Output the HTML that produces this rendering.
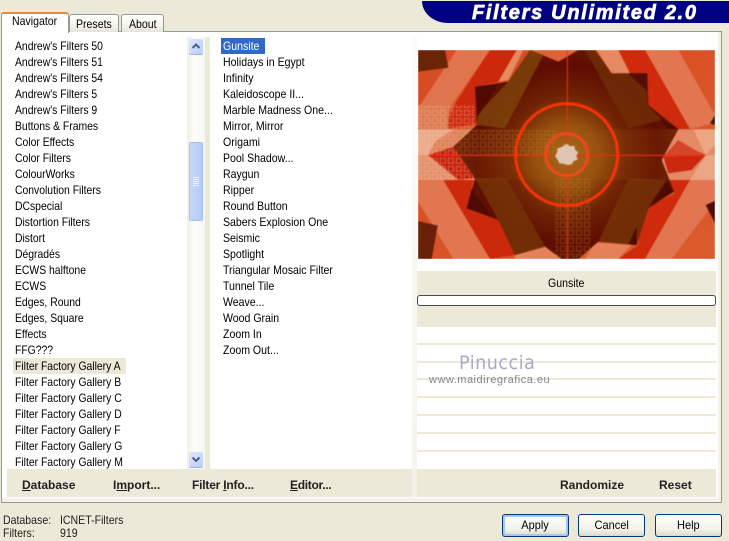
<!DOCTYPE html>
<html><head><meta charset="utf-8"><style>
html,body{margin:0;padding:0}
body{width:729px;height:540px;overflow:hidden;position:relative;background:#ece9d8;font-family:"Liberation Sans",sans-serif;color:#000}
.a{position:absolute}
.t{position:absolute;white-space:nowrap;font-size:12px;line-height:16px;transform:scaleX(.88);transform-origin:0 50%}
.b{position:absolute;white-space:nowrap;font-size:12px;line-height:16px;font-weight:bold;color:#222}
.tab{position:absolute;box-sizing:border-box;border:1px solid #919b9c;border-bottom:0;border-radius:3px 3px 0 0;background:linear-gradient(#fff,#f3f2ea 70%,#e4e2d4)}
.btn{position:absolute;box-sizing:border-box;top:514px;width:67px;height:23px;border:1px solid #003c74;border-radius:3px;background:linear-gradient(#fff,#f3f2ea 70%,#dcd8c8);text-align:center;font-size:12px;line-height:21px}
.btn span{display:inline-block;transform:scaleX(.92)}
.ln{position:absolute;left:417px;width:299px;height:2px;background:#ece9d8}
</style></head><body>

<!-- banner -->
<div class="a" style="left:422px;top:1px;width:307px;height:22px;background:#000080;border-radius:0 0 0 26px/0 0 0 22px"></div>
<div class="a" style="left:472px;top:2px;height:22px;line-height:22px;font-size:20px;font-weight:bold;font-style:italic;color:#fff;letter-spacing:1.7px;white-space:nowrap;-webkit-text-stroke:.7px #fff">Filters Unlimited 2.0</div>

<!-- panel -->
<div class="a" style="left:1px;top:31px;width:721px;height:472px;box-sizing:border-box;border:1px solid #919b9c;background:#fff;box-shadow:inset -3px -4px 0 #f4f2e9"></div>

<!-- tabs -->
<div class="tab" style="left:69px;top:14px;width:50px;height:18px"></div>
<div class="tab" style="left:121px;top:14px;width:43px;height:18px"></div>
<div class="a" style="left:1px;top:12px;width:68px;height:21px;box-sizing:border-box;background:#fff;border:1px solid #919b9c;border-bottom:0;border-top:2px solid #e68b2c;border-radius:3px 3px 0 0"></div>
<div class="t" style="left:12px;top:13px">Navigator</div>
<div class="t" style="left:76px;top:16px">Presets</div>
<div class="t" style="left:129px;top:16px">About</div>

<!-- gutters -->
<div class="a" style="left:205px;top:37px;width:5px;height:460px;background:#ece9d8"></div>
<div class="a" style="left:412px;top:37px;width:5px;height:432px;background:linear-gradient(#fbfbf8,#f6f5ee)"></div>
<div class="a" style="left:412px;top:469px;width:5px;height:28px;background:#f3f1e7"></div>

<!-- scrollbar -->
<div class="a" style="left:187px;top:37px;width:18px;height:432px;background:linear-gradient(90deg,#f0eee4,#fdfdfa 40%,#f7f6f0)"></div>
<div class="a" style="left:189px;top:39px;width:14px;height:15px;border-radius:2px;background:linear-gradient(135deg,#dfe8fd,#b9cdf8);border-bottom:1px solid #9fb4e0"></div>
<svg class="a" style="left:189px;top:39px" width="14" height="15"><path d="M3.500 9 L7 5.500 L10.500 9" fill="none" stroke="#4d6185" stroke-width="2"/></svg>
<div class="a" style="left:189px;top:142px;width:14px;height:79px;box-sizing:border-box;border:1px solid #a9bff0;border-radius:2px;background:linear-gradient(90deg,#c6d6fb,#b6cafa)"></div>
<svg class="a" style="left:189px;top:142px" width="14" height="79"><path d="M4 35.500H10M4 37.500H10M4 39.500H10M4 41.500H10M4 43.500H10" stroke="#eef3ff" stroke-width="1"/></svg>
<div class="a" style="left:189px;top:452px;width:14px;height:15px;border-radius:2px;background:linear-gradient(135deg,#dfe8fd,#b9cdf8);border-bottom:1px solid #9fb4e0"></div>
<svg class="a" style="left:189px;top:452px" width="14" height="15"><path d="M3.500 5.500 L7 9 L10.500 5.500" fill="none" stroke="#4d6185" stroke-width="2"/></svg>

<!-- highlights -->
<div class="a" style="left:13px;top:358px;width:113px;height:16px;background:#ece9d8"></div>
<div class="a" style="left:221px;top:38px;width:44px;height:16px;background:#316ac5"></div>

<!-- left list -->
<div class="t" style="left:15px;top:38px;transform:scaleX(.865)">Andrew's Filters 50<br>Andrew's Filters 51<br>Andrew's Filters 54<br>Andrew's Filters 5<br>Andrew's Filters 9<br>Buttons &amp; Frames<br>Color Effects<br>Color Filters<br>ColourWorks<br>Convolution Filters<br>DCspecial<br>Distortion Filters<br>Distort<br>Dégradés<br>ECWS halftone<br>ECWS<br>Edges, Round<br>Edges, Square<br>Effects<br>FFG???<br>Filter Factory Gallery A<br>Filter Factory Gallery B<br>Filter Factory Gallery C<br>Filter Factory Gallery D<br>Filter Factory Gallery F<br>Filter Factory Gallery G<br>Filter Factory Gallery M</div>

<!-- middle list -->
<div class="t" style="left:223px;top:38px"><span style="color:#fff">Gunsite</span><br>Holidays in Egypt<br>Infinity<br>Kaleidoscope II...<br>Marble Madness One...<br>Mirror, Mirror<br>Origami<br>Pool Shadow...<br>Raygun<br>Ripper<br>Round Button<br>Sabers Explosion One<br>Seismic<br>Spotlight<br>Triangular Mosaic Filter<br>Tunnel Tile<br>Weave...<br>Wood Grain<br>Zoom In<br>Zoom Out...</div>

<!-- preview -->
<div class="a" style="left:418px;top:50px;width:297px;height:209px;overflow:hidden">
<svg style="display:block;filter:blur(.4px)" width="297" height="209" viewBox="9 15 891 627">
<defs>
<radialGradient id="g" gradientUnits="userSpaceOnUse" cx="457" cy="331" r="320">
<stop offset="0" stop-color="#b06c1c"/><stop offset=".3" stop-color="#96500f"/><stop offset=".55" stop-color="#702404"/><stop offset=".85" stop-color="#5e0c02"/><stop offset="1" stop-color="#641604"/>
</radialGradient>
<linearGradient id="o" x1="0" y1="0" x2="1" y2="1"><stop offset="0" stop-color="#d64c22"/><stop offset="1" stop-color="#dc5a2c"/></linearGradient>
<pattern id="p" width="24" height="24" patternUnits="userSpaceOnUse"><rect x="4" y="4" width="15" height="15" fill="none" stroke="#f4c4a4" stroke-opacity=".4" stroke-width="3"/></pattern>
<pattern id="q" width="24" height="24" patternUnits="userSpaceOnUse"><rect x="4" y="4" width="15" height="15" fill="none" stroke="#c08a30" stroke-opacity=".38" stroke-width="3"/></pattern>
</defs>
<rect x="9" y="15" width="891" height="627" fill="url(#o)"/>
<!-- red wedges -->
<polygon points="225,15 305,15 250,110 180,125 188,235 85,253 125,170" fill="#cc280c"/>
<polygon points="610,15 690,15 825,252 790,252 697,180 697,85 640,85" fill="#cf2a0c"/>
<polygon points="760,405 825,405 690,642 610,642 670,600 682,495 780,445" fill="#cf2a0c"/>
<polygon points="85,405 175,405 155,490 250,525 300,630 225,642 145,520" fill="#cc280c"/>
<!-- pale bands -->
<polygon points="125,15 225,15 60,253 9,253 9,190" fill="#e0744c"/>
<polygon points="690,15 790,15 900,210 900,235 825,252" fill="#e17650"/>
<polygon points="825,405 900,405 900,470 770,642 690,642" fill="#e17650"/>
<polygon points="9,405 85,405 225,642 115,642 9,470" fill="#e17650"/>
<polygon points="305,15 325,15 280,105 250,110" fill="#e68a62"/>
<polygon points="545,15 610,15 645,85 590,85" fill="#e68a62"/>
<polygon points="345,15 540,15 430,50" fill="#dc6436"/>
<polygon points="300,630 390,605 440,642 300,642" fill="#e4805a"/>
<polygon points="540,592 650,600 610,642 510,642" fill="#e4805a"/>
<!-- horizontal band -->
<rect x="9" y="253" width="170" height="152" fill="#e4906a"/>
<rect x="9" y="253" width="110" height="77" fill="#ebaa8a"/>
<rect x="9" y="180" width="90" height="73" fill="#dc7a50"/>
<polygon points="40,330 115,305 180,400 130,405" fill="#c4200c"/>
<polygon points="60,290 115,253 160,253 115,305 40,330" fill="#e0805a"/>
<polygon points="790,253 900,253 900,405 760,405 740,345" fill="#e48a64"/>
<polygon points="835,253 900,253 900,300 872,330" fill="#eca684"/>
<polygon points="872,330 900,330 900,405 825,405" fill="#eca684"/>
<polygon points="745,335 872,330 830,375 760,385" fill="#cc2810"/>
<polygon points="790,285 840,315 872,330 745,335" fill="#d4462a"/>
<rect x="9" y="180" width="170" height="225" fill="url(#p)"/>
<!-- star -->
<polygon points="345,15 430,50 490,15 540,15 590,85 697,85 700,180 790,252 740,345 777,440 700,490 665,600 550,590 490,642 440,642 390,605 300,630 250,525 155,490 180,400 115,305 185,240 180,125 280,110" fill="url(#g)"/>
<!-- translucent lighter lobes -->
<polygon points="345,15 385,30 270,250 185,240 190,205 280,110" fill="#7e420a" fill-opacity=".85"/>
<polygon points="510,15 540,15 590,85 697,85 697,180 740,225 640,250" fill="#702e06" fill-opacity=".8"/>
<polygon points="180,400 275,400 390,605 300,630 250,525" fill="#743206" fill-opacity=".85"/>
<polygon points="640,400 760,405 700,490 665,600 550,590" fill="#743206" fill-opacity=".85"/>
<polygon points="115,305 175,253 790,252 740,345 760,405 180,405" fill="#a05a10" fill-opacity=".18"/>
<!-- dark corners -->
<polygon points="180,125 250,118 188,215" fill="#500a02"/>
<polygon points="640,85 697,85 697,140" fill="#540e04"/>
<polygon points="735,218 790,252 755,252" fill="#500a02"/>
<polygon points="755,405 777,440 705,480" fill="#500a02"/>
<polygon points="170,430 230,515 155,490" fill="#500a02"/>
<polygon points="640,598 665,545 665,600" fill="#500a02"/>
<polygon points="9,15 90,15 100,68 9,80" fill="#6c2408"/>
<polygon points="9,528 68,542 50,642 9,642" fill="#682008"/>
<polygon points="900,210 885,235 900,240" fill="#540e04"/>
<polygon points="900,468 872,480 900,535" fill="#540a04"/>
<rect x="125" y="253" width="300" height="80" fill="url(#q)"/>
<rect x="420" y="400" width="105" height="240" fill="url(#q)"/>
<!-- crosshair & rings -->
<path d="M457 15V642M40 331H872" stroke="#ff2a10" stroke-width="3"/>
<circle cx="455" cy="329" r="153" fill="none" stroke="#fb3208" stroke-width="9"/>
<circle cx="455" cy="329" r="63" fill="none" stroke="#f0481a" stroke-width="9"/>
<polygon points="455,296 466,304 478,302 480,314 490,322 484,332 488,344 476,348 470,358 456,360 444,356 434,356 428,344 420,334 426,322 428,310 440,306" fill="#dfc5b2"/>
</svg>
</div>

<!-- right column -->
<div class="a" style="left:417px;top:271px;width:299px;height:56px;background:#ece9d8"></div>
<div class="t" style="left:548px;top:275px">Gunsite</div>
<div class="a" style="left:417px;top:295px;width:299px;height:11px;box-sizing:border-box;border:1px solid #4a4a4a;border-radius:3px;background:#fff"></div>
<div class="ln" style="top:343px"></div>
<div class="ln" style="top:361px"></div>
<div class="ln" style="top:378px"></div>
<div class="ln" style="top:396px"></div>
<div class="ln" style="top:414px"></div>
<div class="ln" style="top:432px"></div>
<div class="ln" style="top:450px"></div>

<!-- watermark -->
<div class="a" style="left:459px;top:351px;font-size:19px;line-height:24px;color:#a8a8c6;letter-spacing:.6px;white-space:nowrap;font-family:'DejaVu Sans',sans-serif;transform:scaleX(.92);transform-origin:0 50%">Pinuccia</div>
<div class="a" style="left:429px;top:373px;font-size:11px;line-height:14px;color:#85858f;letter-spacing:.5px;white-space:nowrap">www.maidiregrafica.eu</div>

<!-- bottom strips -->
<div class="a" style="left:7px;top:469px;width:405px;height:28px;background:#ece9d8"></div>
<div class="a" style="left:417px;top:469px;width:299px;height:28px;background:#ece9d8"></div>
<div class="b" style="left:22px;top:477px"><u>D</u>atabase</div>
<div class="b" style="left:113px;top:477px">I<u>m</u>port...</div>
<div class="b" style="left:192px;top:477px;letter-spacing:-.2px">Filter <u>I</u>nfo...</div>
<div class="b" style="left:290px;top:477px;letter-spacing:-.3px"><u>E</u>ditor...</div>
<div class="b" style="left:560px;top:477px">Randomize</div>
<div class="b" style="left:659px;top:477px">Reset</div>

<!-- status -->
<div class="t" style="left:3px;top:512px;color:#222">Database:</div>
<div class="t" style="left:60px;top:512px;color:#222">ICNET-Filters</div>
<div class="t" style="left:3px;top:525px;color:#222">Filters:</div>
<div class="t" style="left:60px;top:525px;color:#222">919</div>

<!-- buttons -->
<div class="btn" style="left:502px;box-shadow:inset 0 0 0 2px #a9c4ee"><span>Apply</span></div>
<div class="btn" style="left:578px"><span>Cancel</span></div>
<div class="btn" style="left:655px"><span>Help</span></div>
</body></html>
